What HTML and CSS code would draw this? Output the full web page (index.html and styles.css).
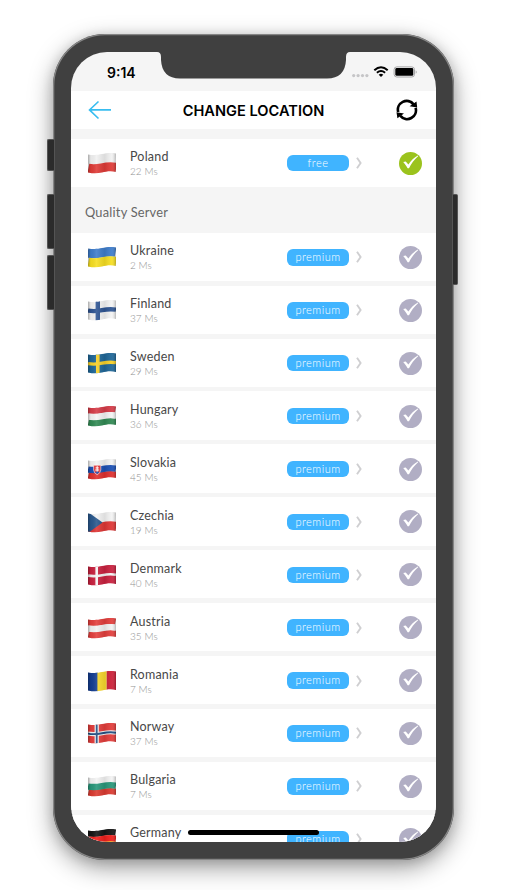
FILE: index.html
```html
<!DOCTYPE html>
<html lang="en">
<head>
<meta charset="utf-8">
<title>Change Location</title>
<link rel="stylesheet" href="styles.css">
</head>
<body>
<svg class="defs" aria-hidden="true">
  <defs>
    <clipPath id="wave"><path d="M0 1.4C6 2.5 10 1.9 14 1.1S22 -.5 28 .5V18.9C22 17.7 18 18.7 14 19.5S6 20.9 0 19.5Z"/></clipPath>
    <linearGradient id="shade">
      <stop offset="0" stop-color="#000" stop-opacity=".3"/>
      <stop offset=".1" stop-color="#000" stop-opacity=".04"/>
      <stop offset=".3" stop-color="#fff" stop-opacity=".1"/>
      <stop offset=".6" stop-color="#000" stop-opacity=".09"/>
      <stop offset=".85" stop-color="#fff" stop-opacity=".06"/>
      <stop offset="1" stop-color="#000" stop-opacity=".25"/>
    </linearGradient>
    <symbol id="check" viewBox="0 0 23 23">
      <circle cx="11.5" cy="11.5" r="11.5" fill="currentColor"/>
      <path d="M4.2 9.9 6.7 9.6 9.4 12.4C12 8.8 15 5.8 18.9 3.6L19.1 4.2C15.2 7.7 12.2 11.5 10 16.3H8.6C7.3 13.8 5.9 11.8 4.2 9.9Z" fill="#fff"/>
    </symbol>
    <symbol id="chevron" viewBox="0 0 7 12">
      <path d="M1 .7 4.6 6 1 11.3" fill="none" stroke="#cfcfd1" stroke-width="1.9"/>
    </symbol>
  </defs>
</svg>
<main class="phone">
  <i class="key mute"></i><i class="key up"></i><i class="key down"></i><i class="key power"></i>
  <div class="screen">
    <div class="status">
      <span class="time">9:14</span>
      <svg class="signals" width="66" height="12" viewBox="0 0 66 12">
        <g fill="#c5c5c7"><circle cx="2.7" cy="9.6" r="1.6"/><circle cx="7.1" cy="9.6" r="1.6"/><circle cx="11.5" cy="9.6" r="1.6"/><circle cx="15.9" cy="9.6" r="1.6"/></g>
        <g fill="none" stroke="#000" stroke-width="2"><path d="M23.3 4.2Q30 -1.8 36.7 4.2M25.9 6.8Q30 3.3 34.1 6.8"/></g>
        <path d="M27.7 8.7Q30 7 32.3 8.7L30 11.1Z"/>
        <rect x="43.1" y=".9" width="20.4" height="10.1" rx="2.7" fill="none" stroke="#a5a5a7"/>
        <rect x="44.3" y="2.1" width="18" height="7.7" rx="1.4"/>
        <path d="M64.7 4.2Q66.8 6 64.7 7.8Z" fill="#aaa"/>
      </svg>
    </div>
    <header class="bar">
      <svg class="back" width="24" height="20" viewBox="0 0 24 20"><path d="M10.5 1.5 1.5 9.9 10.5 18.5M1.5 9.9H23" fill="none" stroke="#38bdf0" stroke-width="1.6"/></svg>
      <h1>CHANGE LOCATION</h1>
      <svg class="reload" width="22" height="22" viewBox="0 0 22 22">
        <g fill="none" stroke="#000" stroke-width="2.7"><path d="M2.2 13A8.8 8.8 0 0 1 17.6 5.3M19.6 8.8A8.8 8.8 0 0 1 4.4 16.9"/></g>
        <path d="M20.5 2.6 21.2 8.4 13.6 7.3ZM.5 13.2 8 14.4 1.4 19.2Z"/>
      </svg>
    </header>
    <section class="list selected" id="current"></section>
    <h2>Quality Server</h2>
    <section class="list" id="servers"></section>
    <div class="home"></div>
  </div>
  <svg class="notch" width="193" height="27" viewBox="0 0 193 27"><path d="M0 0H193Q189 0 189 5V8Q188 26.5 170 26.5H23Q5 26.5 4 8V5Q4 0 0 0Z" fill="#404040"/></svg>
</main>
<script src="app.js"></script>
</body>
</html>
```
FILE: app.js
```js
// A horizontal band that follows the wave of the flag.
function band(y, h, color, x = 0, w = 28) {
  const m = y + h / 2;
  return `<path d="M${x} ${m + .4}C${x + w * .2} ${m + 1.5} ${x + w * .36} ${m + .8} ${x + w / 2} ${m}S${x + w * .8} ${m - 1.5} ${x + w} ${m - .5}" fill="none" stroke="${color}" stroke-width="${h + .1}"/>`;
}
const column = (x, w, color) => `<rect x="${x}" width="${w}" height="22" fill="${color}"/>`;
const thirds = (a, b, c) => band(-4, 11, a) + band(13, 10, c) + band(7, 6.2, b);
const halves = (a, b) => band(-4, 14.3, a) + band(10.3, 13, b);
const cross = (bg, fg, x = 7.6, w = 4, h = 3.6) => column(0, 28, bg) + column(x, w, fg) + band(10.2 - h / 2, h, fg);

const flags = {
  Poland: halves('#f1f1f1', '#df3b37'),
  Ukraine: halves('#3f7dcb', '#f7df22'),
  Finland: cross('#f4f4f4', '#2e5593', 7.6, 4.4, 4.2),
  Sweden: cross('#1f6798', '#f8d128', 8, 3.6, 3.2),
  Hungary: thirds('#d63c48', '#f5f5f5', '#318a54'),
  Slovakia: thirds('#f3f3f3', '#1c50b4', '#e0302f') +
    '<path d="M5.6 6.2H12.8V11Q12.4 14.3 9.2 15.7Q6 14.3 5.6 11Z" fill="#e33236" stroke="#fff" stroke-width=".6"/><path d="M9.2 7.2V13M7.6 8.9H10.8M7.2 11H11.2" stroke="#fff" stroke-width="1"/><path d="M7 13.2Q9.2 11.8 11.4 13.2L9.2 15Z" fill="#1c50b4"/>',
  Czechia: halves('#f3f3f3', '#df3635') + '<path d="M0 0 14.5 10.4 0 21Z" fill="#29588d"/>',
  Denmark: cross('#c9213f', '#f5f5f5', 7.4, 2.6, 2.5),
  Austria: thirds('#e33f3d', '#f3f3f3', '#e33f3d'),
  Romania: column(0, 10, '#143d91') + column(9.4, 9.3, '#f9d82d') + column(18.7, 10, '#cd2038'),
  Norway: cross('#e33d3b', '#f5f5f5', 6.6, 4.2, 4) + column(7.8, 1.8, '#214d82') + band(9.3, 1.8, '#214d82'),
  Bulgaria: thirds('#f3f3f3', '#28977a', '#db3b31'),
  Germany: thirds('#151515', '#f0201c', '#f8d128'),
};

function row([name, ping], plan) {
  return `<article class="row">
    <svg class="flag" width="28" height="21" viewBox="0 0 28 21"><g clip-path="url(#wave)">${flags[name]}<rect width="28" height="22" fill="url(#shade)"/></g></svg>
    <div class="place"><b>${name}</b><small>${ping ? ping + ' Ms' : ''}</small></div>
    <span class="badge">${plan}</span>
    <svg class="chevron" width="7" height="12"><use href="#chevron"/></svg>
    <svg class="check" width="23" height="23"><use href="#check"/></svg>
  </article>`;
}

const servers = [['Ukraine', 2], ['Finland', 37], ['Sweden', 29], ['Hungary', 36], ['Slovakia', 45], ['Czechia', 19],
  ['Denmark', 40], ['Austria', 35], ['Romania', 7], ['Norway', 37], ['Bulgaria', 7], ['Germany', null]];
document.getElementById('current').innerHTML = row(['Poland', 22], 'free');
document.getElementById('servers').innerHTML = servers.map(s => row(s, 'premium')).join('');
```
FILE: styles.css
```css
* { box-sizing: border-box; }
body { margin: 0; height: 890px; overflow: hidden; background: #fff; font-family: Lato, "Open Sans", sans-serif; }
.defs { position: absolute; width: 0; height: 0; }
.phone {
  position: relative; width: 401px; height: 826px; margin: 34px 0 0 53px; padding: 18px;
  border-radius: 52px; background: #404040;
  box-shadow: inset 0 0 0 1.3px #858585, 0 8px 24px rgba(0,0,0,.38), 0 2px 12px rgba(0,0,0,.14);
}
.screen { position: relative; width: 365px; height: 790px; overflow: hidden; border-radius: 36px; background: #f5f5f5; }
.notch { position: absolute; left: 104px; top: 18px; }
.key { position: absolute; left: -6px; width: 7px; background: #2b2b2b; border: 1px solid #555; border-right-width: 0; border-radius: 2px 0 0 2px; }
.mute { top: 105px; height: 32px; }
.up { top: 160px; height: 55px; }
.down { top: 221px; height: 55px; }
.power { left: auto; right: -4px; top: 160px; height: 91px; width: 5px; border-width: 1px 1px 1px 0; border-radius: 0 2px 2px 0; }
.status { height: 39px; display: flex; justify-content: space-between; padding: 12px 19px 0 36px; }
.time { font: 600 14px/17px Inter, sans-serif; }
.signals { margin-top: 2px; }
.bar { height: 38px; display: flex; align-items: center; justify-content: space-between; padding: 0 18px 0 17px; background: #fff; }
h1 { margin: 1px 1px 0 0; font: 600 14.6px/20px Inter, sans-serif; }
.list { display: grid; gap: 4.6px; }
.selected { padding-top: 9.5px; }
.row { display: flex; align-items: center; height: 48.3px; background: #fff; padding: 1px 14px 0 17px; }
.flag { margin-top: 1px; }
.place { width: 157px; margin-left: 14px; display: flex; flex-direction: column; padding-top: 1px; }
.place b { font-weight: 400; font-size: 12.5px; line-height: 16px; height: 15px; letter-spacing: .2px; color: #484848; }
.place small { height: 14px; font-size: 10px; line-height: 14px; letter-spacing: .05px; font-weight: 300; color: #929292; }
.badge { width: 62px; height: 16.5px; border-radius: 6px; background: #40b4ff; color: #fff; font-size: 11px; font-weight: 300; line-height: 16px; letter-spacing: .5px; text-align: center; }
.chevron { margin-left: 7px; }
.check { margin-left: auto; color: #b1aec4; }
.selected .check { color: #9bc31d; }
h2 { margin: 0; height: 46px; padding-left: 14px; font-weight: 400; font-size: 12.8px; line-height: 50px; letter-spacing: .22px; color: #666; }
.home { position: absolute; left: 117px; top: 778px; width: 131px; height: 5px; border-radius: 3px; background: #000; }
```
